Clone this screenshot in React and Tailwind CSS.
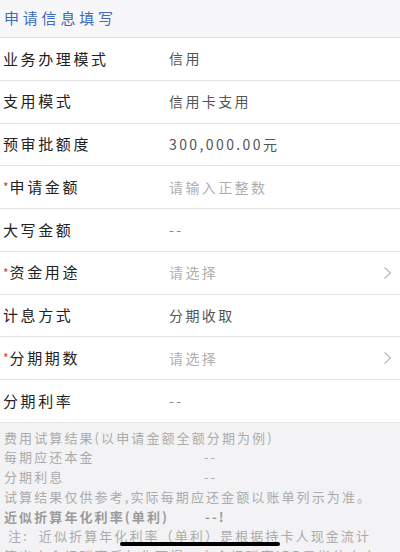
import React from 'react';

const rows = [
  { label: '业务办理模式', value: '信用' },
  { label: '支用模式', value: '信用卡支用' },
  { label: '预审批额度', value: '300,000.00元' },
  { label: '申请金额', value: '请输入正整数', required: true, placeholder: true },
  { label: '大写金额', value: '--', dash: true },
  { label: '资金用途', value: '请选择', required: true, placeholder: true, arrow: true },
  { label: '计息方式', value: '分期收取' },
  { label: '分期期数', value: '请选择', required: true, placeholder: true, arrow: true },
  { label: '分期利率', value: '--', dash: true },
];

function Chevron() {
  return (
    <svg className="w-[9px] h-[14px]" viewBox="0 0 9 14" fill="none">
      <path d="M1.5 1.5L7.5 7L1.5 12.5" stroke="#b8b8b8" strokeWidth="1.2" />
    </svg>
  );
}

function FormRow({ label, value, required, placeholder, dash, arrow }) {
  let valueColor = 'text-[#555]';
  if (placeholder) valueColor = 'text-[#b0b0b0]';
  if (dash) valueColor = 'text-[#888]';
  return (
    <div className="h-[42.75px] flex items-center border-b border-[#e2e2e4] bg-white pl-[3px] pr-[8px]">
      <div className="w-[166px] text-[15px] tracking-[2.6px] text-[#222] flex items-center">
        {required && <span className="text-[#e0362c] text-[12px] tracking-normal mr-[1px]">*</span>}
        {label}
      </div>
      <div className={`flex-1 text-[14px] tracking-[2.4px] ${valueColor}`}>{value}</div>
      {arrow && <Chevron />}
    </div>
  );
}

export default function App() {
  return (
    <div
      className="relative w-full h-[552px] overflow-hidden bg-[#f3f3f5]"
      style={{ fontFamily: '"Noto Sans CJK SC", "Noto Sans", sans-serif' }}
    >
      <div className="h-[38px] flex items-center px-[4px] bg-[#f7f7f9] border-b border-[#e2e2e4]">
        <span className="text-[15px] tracking-[3.8px] text-[#3c6cbf]">申请信息填写</span>
      </div>
      {rows.map((r) => (
        <FormRow key={r.label} {...r} />
      ))}
      <div className="px-[4px] pt-[5px] text-[13px] leading-[19.7px] tracking-[2.1px] text-[#ababab]">
        <div>费用试算结果(以申请金额全额分期为例)</div>
        <div className="flex">
          <span className="w-[200px]">每期应还本金</span>
          <span>--</span>
        </div>
        <div className="flex">
          <span className="w-[200px]">分期利息</span>
          <span>--</span>
        </div>
        <div>试算结果仅供参考,实际每期应还金额以账单列示为准。</div>
        <div className="flex font-bold text-[#9a9a9a]">
          <span className="w-[201px]">近似折算年化利率(单利)</span>
          <span>--!</span>
        </div>
        <div className="whitespace-nowrap pl-[4px]">注:&nbsp;&nbsp;近似折算年化利率（单利）是根据持卡人现金流计</div>
        <div className="whitespace-nowrap">算出内含报酬率后年化而得。内含报酬率IRR是指使未来</div>
      </div>
      <div className="absolute left-[120px] bottom-[6px] w-[160px] h-[4px] rounded-full bg-black" />
    </div>
  );
}
